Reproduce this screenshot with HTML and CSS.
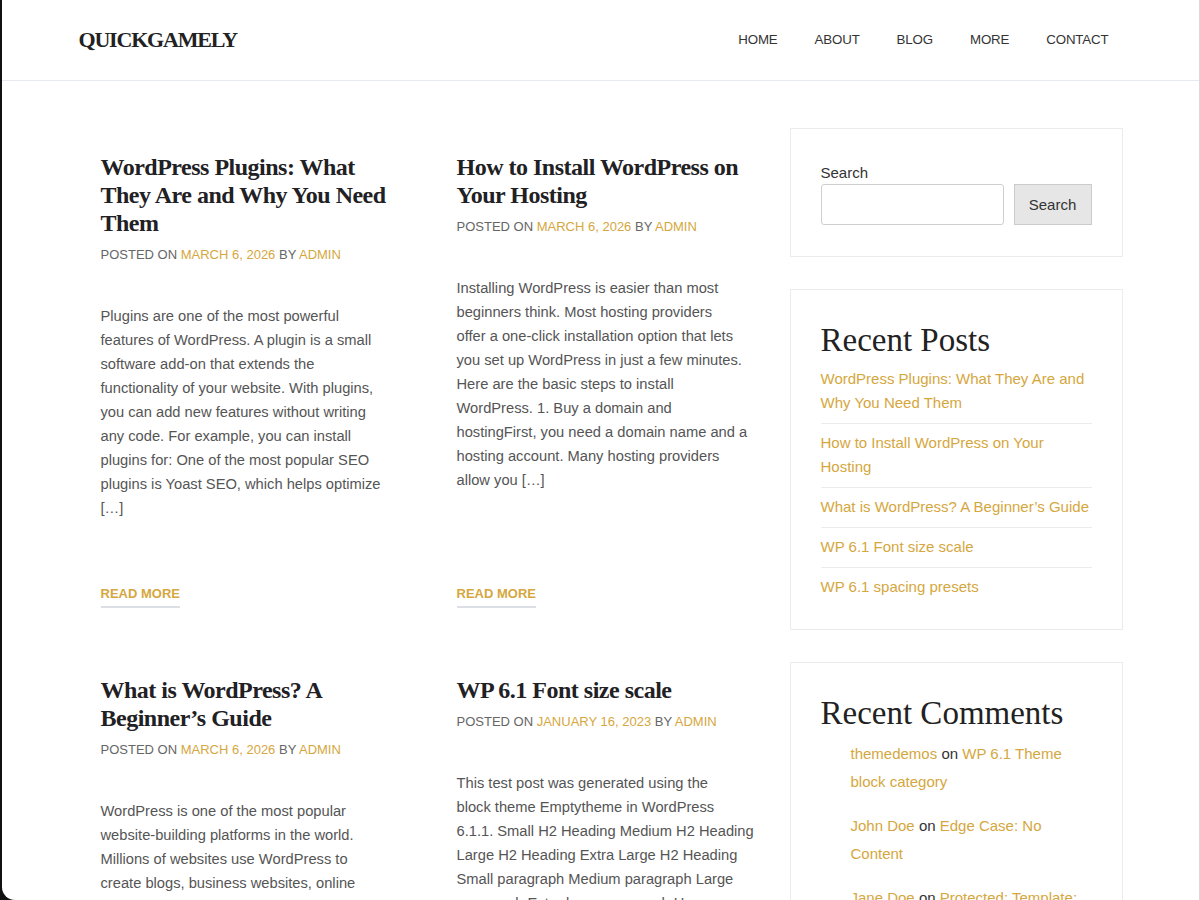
FILE: index.html
```html
<!DOCTYPE html>
<html lang="en">
<head>
<meta charset="utf-8">
<title>QuickGamely</title>
<link rel="stylesheet" href="styles.css">
</head>
<body>
<div class="window">
  <header class="site-header">
    <div class="container header-inner">
      <a class="logo" href="#">QUICKGAMELY</a>
      <nav class="nav">
        <a href="#">HOME</a>
        <a href="#">ABOUT</a>
        <a href="#">BLOG</a>
        <a href="#">MORE</a>
        <a href="#">CONTACT</a>
      </nav>
    </div>
  </header>

  <div class="container main">
    <main class="posts">
      <article class="post">
        <h2 class="post-title"><a href="#">WordPress Plugins: What They Are and Why You Need Them</a></h2>
        <div class="meta">POSTED ON <a href="#">MARCH 6, 2026</a> BY <a href="#">ADMIN</a></div>
        <p class="excerpt">Plugins are one of the most powerful<br>features of WordPress. A plugin is a small<br>software add-on that extends the<br>functionality of your website. With plugins,<br>you can add new features without writing<br>any code. For example, you can install<br>plugins for: One of the most popular SEO<br>plugins is Yoast SEO, which helps optimize<br>[…]</p>
        <div class="more-wrap"><a class="more" href="#">READ MORE</a></div>
      </article>

      <article class="post">
        <h2 class="post-title"><a href="#">How to Install WordPress on Your Hosting</a></h2>
        <div class="meta">POSTED ON <a href="#">MARCH 6, 2026</a> BY <a href="#">ADMIN</a></div>
        <p class="excerpt">Installing WordPress is easier than most<br>beginners think. Most hosting providers<br>offer a one-click installation option that lets<br>you set up WordPress in just a few minutes.<br>Here are the basic steps to install<br>WordPress. 1. Buy a domain and<br>hostingFirst, you need a domain name and a<br>hosting account. Many hosting providers<br>allow you […]</p>
        <div class="more-wrap"><a class="more" href="#">READ MORE</a></div>
      </article>

      <article class="post">
        <h2 class="post-title"><a href="#">What is WordPress? A Beginner’s Guide</a></h2>
        <div class="meta">POSTED ON <a href="#">MARCH 6, 2026</a> BY <a href="#">ADMIN</a></div>
        <p class="excerpt">WordPress is one of the most popular<br>website-building platforms in the world.<br>Millions of websites use WordPress to<br>create blogs, business websites, online<br>stores, portfolios, news sites and much<br>more. It is free, flexible and easy to use […]</p>
        <div class="more-wrap"><a class="more" href="#">READ MORE</a></div>
      </article>

      <article class="post">
        <h2 class="post-title"><a href="#">WP 6.1 Font size scale</a></h2>
        <div class="meta">POSTED ON <a href="#">JANUARY 16, 2023</a> BY <a href="#">ADMIN</a></div>
        <p class="excerpt">This test post was generated using the<br>block theme Emptytheme in WordPress<br>6.1.1. Small H2 Heading Medium H2 Heading<br>Large H2 Heading Extra Large H2 Heading<br>Small paragraph Medium paragraph Large<br>paragraph Extra large paragraph Huge<br>paragraph […]</p>
        <div class="more-wrap"><a class="more" href="#">READ MORE</a></div>
      </article>
    </main>

    <aside class="sidebar">
      <section class="widget search-widget">
        <label class="search-label" for="s">Search</label>
        <form class="search-form">
          <input class="search-input" id="s" type="text">
          <button class="search-btn" type="button">Search</button>
        </form>
      </section>

      <section class="widget">
        <h2 class="widget-title">Recent Posts</h2>
        <ul class="recent-posts">
          <li><a href="#">WordPress Plugins: What They Are and Why You Need Them</a></li>
          <li><a href="#">How to Install WordPress on Your Hosting</a></li>
          <li><a href="#">What is WordPress? A Beginner’s Guide</a></li>
          <li><a href="#">WP 6.1 Font size scale</a></li>
          <li><a href="#">WP 6.1 spacing presets</a></li>
        </ul>
      </section>

      <section class="widget">
        <h2 class="widget-title">Recent Comments</h2>
        <ul class="recent-comments">
          <li><a href="#">themedemos</a> on <a href="#">WP 6.1 Theme block category</a></li>
          <li><a href="#">John Doe</a> on <a href="#">Edge Case: No Content</a></li>
          <li><a href="#">Jane Doe</a> on <a href="#">Protected: Template: Password Protected</a></li>
        </ul>
      </section>
    </aside>
  </div>
</div>
</body>
</html>
```

FILE: styles.css
```css
html, body {
  margin: 0;
  padding: 0;
}

body {
  background: #111;
  font-family: "Liberation Sans", Arial, sans-serif;
  color: #555;
}

a {
  text-decoration: none;
  color: #d5a73e;
}

.window {
  margin-left: 2px;
  height: 900px;
  overflow: hidden;
  background: #fff;
  border-right: 1px solid #d9d9d9;
  border-bottom-left-radius: 13px;
}

.container {
  width: 1044px;
  margin: 0 auto;
}

/* Header */
.site-header {
  border-bottom: 1px solid #e6eaee;
}

.header-inner {
  height: 80px;
  display: flex;
  align-items: center;
  justify-content: space-between;
}

.logo {
  font-family: "Liberation Serif", "Times New Roman", serif;
  font-weight: 700;
  font-size: 22px;
  letter-spacing: -1.2px;
  color: #222;
}

.nav {
  display: flex;
  gap: 37px;
  margin-right: 14px;
}

.nav a {
  font-size: 13.3px;
  letter-spacing: -0.15px;
  color: #333;
  line-height: 20px;
}

/* Main layout */
.main {
  display: grid;
  grid-template-columns: 1fr 333px;
  column-gap: 31px;
  padding-top: 47px;
}

.posts {
  display: grid;
  grid-template-columns: 298px 298px;
  column-gap: 58px;
  row-gap: 68px;
  padding: 25px 0 0 22px;
  align-content: start;
}

.post {
  display: flex;
  flex-direction: column;
}

.post-title {
  margin: 0 0 6px;
  font-family: "Liberation Serif", "Times New Roman", serif;
  font-weight: 700;
  font-size: 24px;
  letter-spacing: -0.5px;
  line-height: 28px;
}

.post-title a {
  color: #1f2124;
}

.meta {
  font-size: 13px;
  line-height: 24px;
  color: #666;
  margin-bottom: 37px;
}

.excerpt {
  margin: 0;
  font-size: 14.7px;
  line-height: 24px;
  color: #555;
}

.more-wrap {
  margin-top: auto;
  padding-top: 64px;
}

.more {
  display: inline-block;
  font-size: 13px;
  font-weight: 700;
  line-height: 20px;
  padding-bottom: 2px;
  border-bottom: 2px solid #dcdfe3;
}

/* Sidebar */
.widget {
  border: 1px solid #ececec;
  padding: 30px;
  margin-bottom: 32px;
}

.search-widget {
  padding-top: 33px;
  padding-bottom: 31px;
}

.search-label {
  display: block;
  font-size: 15px;
  line-height: 22px;
  color: #333;
}

.search-form {
  display: flex;
  gap: 10px;
  margin: 0;
}

.search-input {
  width: 183px;
  height: 41px;
  box-sizing: border-box;
  border: 1px solid #cfcfcf;
  border-radius: 3px;
  margin: 0;
  padding: 0 8px;
}

.search-btn {
  width: 78px;
  height: 41px;
  box-sizing: border-box;
  background: #e6e6e6;
  border: 1px solid #cbcbcb;
  border-radius: 0;
  font-family: "Liberation Sans", Arial, sans-serif;
  font-size: 15px;
  color: #333;
  margin: 0;
  padding: 0;
}

.widget-title {
  margin: 0 0 7px;
  font-family: "Liberation Serif", "Times New Roman", serif;
  font-weight: 400;
  font-size: 33px;
  line-height: 40px;
  color: #222;
}

.recent-posts {
  list-style: none;
  margin: 0;
  padding: 0;
  font-size: 15px;
  line-height: 24px;
}

.recent-posts li {
  padding: 7px 0 8px;
  border-bottom: 1px solid #ececec;
}

.recent-posts li:first-child {
  padding-top: 0;
}

.recent-posts li:last-child {
  padding-bottom: 0;
  border-bottom: none;
}

.recent-comments {
  list-style: none;
  margin: 0;
  padding: 0 0 0 30px;
  font-size: 15px;
  line-height: 28px;
  color: #333;
}

.recent-comments li {
  margin-bottom: 16px;
}
```
